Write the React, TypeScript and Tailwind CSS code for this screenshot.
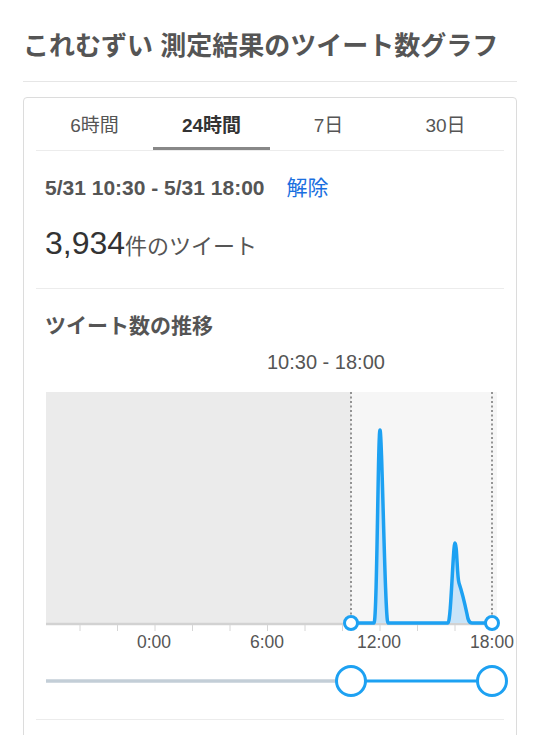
const font = { fontFamily: '"Liberation Sans", "Noto Sans CJK JP", sans-serif' };

const tabs = ["6時間", "24時間", "7日", "30日"];

// chart positions are in svg coords (page x - 36, page y - 392)
const ticks = Array.from({ length: 12 }, (_, i) => 44 + i * 37.5);
const labels = [
  { x: 118, t: "0:00" },
  { x: 231, t: "6:00" },
  { x: 343, t: "12:00" },
  { x: 456, t: "18:00" },
];

const line =
  "M315 231 L338 231 C341 231 342 38 344 38 C346 38 349 231 352 231 L412 231 C415 231 417 151 419 151 C421 151 421 185 423 191 C426 200 428 208 431 222 C432 228 433 231 436 231 L456 231";

function Chart() {
  return (
    <svg width="480" height="270" className="block overflow-visible">
      <rect x="10" y="0" width="305" height="232" fill="#ebebeb" />
      <rect x="315" y="0" width="146" height="232" fill="#f6f6f6" />
      <line x1="10" y1="232" x2="461" y2="232" stroke="#d2d2d2" strokeWidth="2.5" />
      {ticks.map((x) => (
        <line key={x} x1={x} y1="233" x2={x} y2="239" stroke="#d6d6d6" strokeWidth="1" />
      ))}
      {labels.map((l) => (
        <text key={l.t} x={l.x} y="256" textAnchor="middle" fontSize="17.5" fill="#555">
          {l.t}
        </text>
      ))}
      <line x1="315" y1="0" x2="315" y2="231" stroke="#8a8a8a" strokeWidth="1.8" strokeDasharray="2 2.5" />
      <line x1="456" y1="0" x2="456" y2="231" stroke="#8a8a8a" strokeWidth="1.8" strokeDasharray="2 2.5" />
      <path d={line + " Z"} fill="#c9e4f8" />
      <path d={line} fill="none" stroke="#1da1f2" strokeWidth="3.5" strokeLinejoin="round" />
      <circle cx="315" cy="231" r="6.5" fill="#fff" stroke="#1da1f2" strokeWidth="3" />
      <circle cx="456" cy="231" r="6.5" fill="#fff" stroke="#1da1f2" strokeWidth="3" />
    </svg>
  );
}

function RangeSlider() {
  return (
    <svg width="480" height="38" className="block overflow-visible">
      <line x1="10" y1="19" x2="315" y2="19" stroke="#c3ced7" strokeWidth="3.5" />
      <line x1="315" y1="19" x2="456" y2="19" stroke="#1da1f2" strokeWidth="3" />
      <circle cx="315" cy="19" r="14.5" fill="#fff" stroke="#1da1f2" strokeWidth="3" />
      <circle cx="456" cy="19" r="14.5" fill="#fff" stroke="#1da1f2" strokeWidth="3" />
    </svg>
  );
}

export default function App() {
  return (
    <div className="min-h-screen bg-white px-[23px]" style={font}>
      <h1 className="border-b border-[#e6e6e6] pt-[29px] pb-[18px] text-[26px] leading-[34px] font-bold text-[#555]">
        これむずい 測定結果のツイート数グラフ
      </h1>

      <div className="mt-[15px] rounded-[4px] border border-[#dcdcdc] px-[12px] pb-[40px]">
        <div className="flex border-b border-[#ececec]">
          {tabs.map((t, i) => (
            <div
              key={t}
              className={
                i === 1
                  ? "flex-1 border-b-[3px] border-[#888] pt-[16px] pb-[9px] text-center text-[19px] leading-[24px] font-bold text-[#333]"
                  : "flex-1 border-b-[3px] border-transparent pt-[16px] pb-[9px] text-center text-[19px] leading-[24px] text-[#555]"
              }
            >
              {t}
            </div>
          ))}
        </div>

        <div className="border-b border-[#ececec] px-[9px] pt-[23px] pb-[21px]">
          <div className="flex items-center gap-[22px] leading-[28px]">
            <span className="text-[21px] font-bold text-[#555]">5/31 10:30 - 5/31 18:00</span>
            <span className="text-[21px] text-[#1a6fe0]">解除</span>
          </div>
          <div className="mt-[21px] flex items-baseline leading-[40px]">
            <span className="text-[32px] text-[#333]">3,934</span>
            <span className="text-[22px] text-[#555]">件のツイート</span>
          </div>
        </div>

        <div className="border-b border-[#ececec] pt-[23px] pb-[19px]">
          <div className="px-[9px] text-[21px] leading-[28px] font-bold text-[#555]">ツイート数の推移</div>
          <div className="mt-[9px] pl-[231px] text-[20px] leading-[26px] text-[#555]">10:30 - 18:00</div>
          <div className="mt-[17px]">
            <Chart />
            <RangeSlider />
          </div>
        </div>
      </div>
    </div>
  );
}
